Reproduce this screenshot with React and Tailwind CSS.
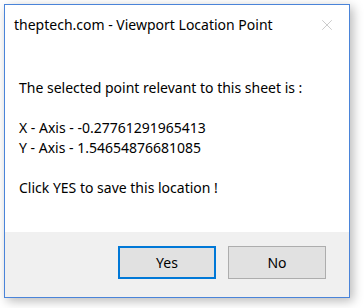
import { X } from "lucide-react";

const font = { fontFamily: '"Segoe UI", "Noto Sans", "Open Sans", sans-serif' };

export default function App() {
  return (
    <div className="w-[364px] h-[308px] bg-white pt-1 pl-1" style={font}>
      <div className="w-[346px] h-[294px] border border-[#4a84d9] bg-white flex flex-col shadow-[3px_3px_10px_rgba(0,0,0,0.28)]">
        {/* Title bar */}
        <div className="h-[38px] flex items-center justify-between pl-[9px] pr-[13px] pt-[1px]">
          <span className="text-[14px] text-black">theptech.com - Viewport Location Point</span>
          <X size={18} strokeWidth={0.9} className="text-[#b3b3b3]" />
        </div>

        {/* Message */}
        <div className="flex-1 pl-[14px] pt-[35px] text-[14px] leading-[20px] text-black">
          <p>The selected point relevant to this sheet is :</p>
          <p>&nbsp;</p>
          <p>X - Axis - -0.27761291965413</p>
          <p>Y - Axis - 1.54654876681085</p>
          <p>&nbsp;</p>
          <p>Click YES to save this location !</p>
        </div>

        {/* Buttons */}
        <div className="h-[65px] bg-[#f0f0f0] flex justify-end items-start gap-[12px] pt-[14px] pr-[23px]">
          <button className="w-[98px] h-[33px] bg-[#e1e1e1] border-2 border-[#0078d7] text-[14px] text-black">
            Yes
          </button>
          <button className="w-[98px] h-[33px] bg-[#e1e1e1] border border-[#adadad] text-[14px] text-black">
            No
          </button>
        </div>
      </div>
    </div>
  );
}
